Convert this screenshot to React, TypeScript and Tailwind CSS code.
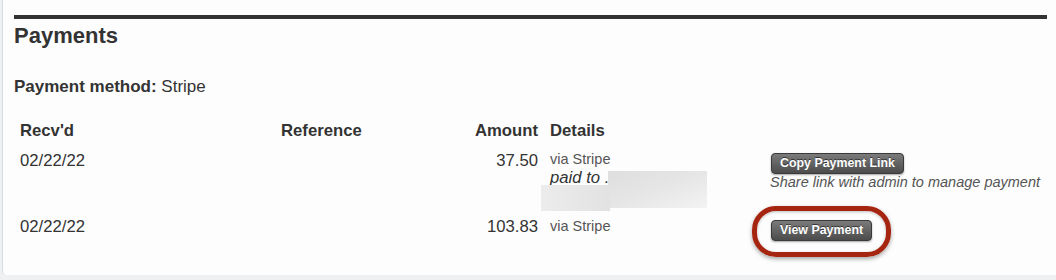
import React from "react";

const btn =
  "inline-block h-[21px] px-[8px] rounded-[4px] border border-[#3a3a3a] bg-linear-to-b from-[#7b7b7b] to-[#4c4c4c] text-white font-bold text-[12.4px] leading-[19px] whitespace-nowrap shadow-[0_1px_2px_rgba(0,0,0,0.35)] [text-shadow:0_-1px_0_rgba(0,0,0,0.55)]";

export default function App() {
  return (
    <div
      className="w-[1056px] h-[280px] bg-[#eef0f1] overflow-hidden text-[#333]"
      style={{ fontFamily: '"Liberation Sans", Arial, sans-serif' }}
    >
      <div className="ml-[2px] h-[275px] bg-[#fdfdfd] border-l border-[#d6dbde] rounded-bl-[4px] pl-[11px] pr-[9px] pt-[15px]">
        <div className="h-[4px] bg-[#333]" />
        <h2 className="mt-[4px] text-[22px] leading-[26px] font-bold">Payments</h2>
        <div className="mt-[28px] text-[17px] leading-[19px]">
          <span className="font-bold">Payment method:</span> Stripe
        </div>
        <table className="mt-[25px] table-fixed border-collapse w-full text-[16.7px] leading-[19px]">
          <colgroup>
            <col className="w-[261px]" />
            <col className="w-[190px]" />
            <col className="w-[79px]" />
            <col className="w-[221px]" />
            <col />
          </colgroup>
          <thead>
            <tr>
              <th className="text-left font-bold pl-[6px] p-0">Recv'd</th>
              <th className="text-left font-bold pl-[6px] p-0">Reference</th>
              <th className="text-right font-bold pr-[6px] p-0">Amount</th>
              <th className="text-left font-bold pl-[6px] p-0">Details</th>
              <th className="p-0" />
            </tr>
          </thead>
          <tbody>
            <tr className="align-top">
              <td className="pl-[6px] pt-[11px]">02/22/22</td>
              <td className="pl-[6px] pt-[11px]" />
              <td className="text-right pr-[6px] pt-[11px]">37.50</td>
              <td className="pl-[6px] pt-[11px]">
                <div className="relative h-[60px]">
                  <div className="text-[14.5px] leading-[17px] text-[#555]">via Stripe</div>
                  <div className="italic leading-[19px]">paid to .</div>
                  <div className="absolute left-[58px] top-[20px] w-[99px] h-[37px] bg-linear-to-br from-[#dedede] via-[#e6e6e6] to-[#f3f3f3]" />
                  <div className="absolute left-[-9px] top-[34px] w-[69px] h-[26px] bg-linear-to-r from-[#ececec] to-[#e2e2e2]" />
                </div>
              </td>
              <td className="pl-[6px] pt-[12px]">
                <span className={btn}>Copy Payment Link</span>
                <div className="italic text-[14.5px] leading-[17px] text-[#555] -ml-[1px]">
                  Share link with admin to manage payment
                </div>
              </td>
            </tr>
            <tr className="align-top">
              <td className="pl-[6px] pt-[6px]">02/22/22</td>
              <td className="pl-[6px] pt-[6px]" />
              <td className="text-right pr-[6px] pt-[6px]">103.83</td>
              <td className="pl-[6px] pt-[7px]">
                <div className="text-[14.5px] leading-[17px] text-[#555]">via Stripe</div>
              </td>
              <td className="pl-[6px] pt-[8px]">
                <span className="relative inline-block">
                  <span className={btn}>View Payment</span>
                  <span className="absolute -left-[19px] -right-[19px] -top-[13px] -bottom-[16px] rounded-[24px] border-[5px] border-[#a62511] shadow-[0_2px_4px_rgba(0,0,0,0.35),inset_0_1px_3px_rgba(0,0,0,0.25)]" />
                </span>
              </td>
            </tr>
          </tbody>
        </table>
      </div>
    </div>
  );
}
